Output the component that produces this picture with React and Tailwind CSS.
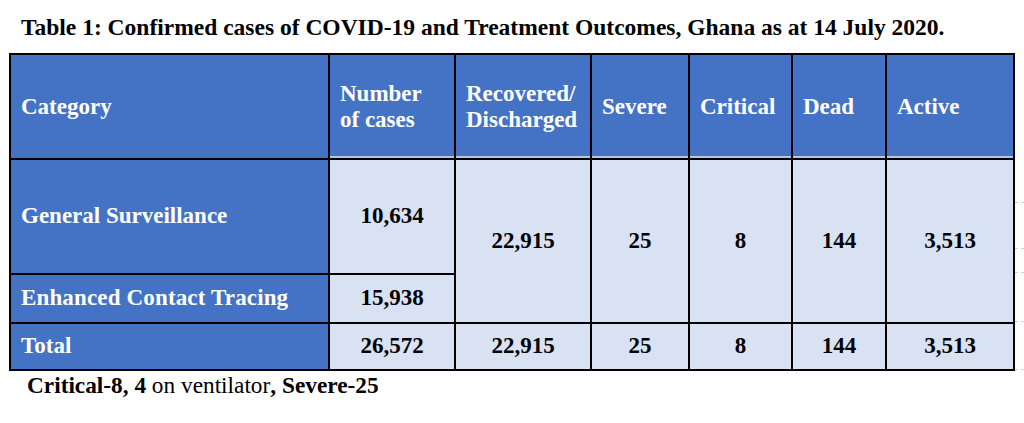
import React from "react";

const H = "bg-[#4472c4] text-white font-bold flex items-center px-[10px] leading-[26px]";
const HN = H + " shadow-[inset_0_-2px_0_#b4c6e7]";
const L = "bg-[#d9e2f3] text-black font-bold flex items-center justify-center";
const C = "bg-[#4472c4] text-white font-bold flex items-center pl-[10px]";

export default function App() {
  return (
    <div className="w-[1024px] h-[423px] bg-white font-[family-name:'Liberation_Serif',serif] text-black overflow-hidden">
      <div className="pt-[15px] pl-[21px] text-[23.5px] leading-[25px] font-bold mb-[13px] whitespace-nowrap">
        Table 1: Confirmed cases of COVID-19 and Treatment Outcomes, Ghana as at 14 July 2020.
      </div>
      <div className="flex pl-[9px]">
        <div className="w-[1006px] bg-black p-[2px] grid gap-[2px] grid-cols-[317px_124px_134px_96px_101px_92px_126px] grid-rows-[103px_113px_47px_45px] text-[23px]">
          <div className={H}>Category</div>
          <div className={HN}>Number<br />of cases</div>
          <div className={HN}>Recovered/<br />Discharged</div>
          <div className={HN}>Severe</div>
          <div className={HN}>Critical</div>
          <div className={HN}>Dead</div>
          <div className={HN}>Active</div>

          <div className={C}>General Surveillance</div>
          <div className={L}>10,634</div>
          <div className={L + " row-span-2"}>22,915</div>
          <div className={L + " row-span-2"}>25</div>
          <div className={L + " row-span-2"}>8</div>
          <div className={L + " row-span-2"}>144</div>
          <div className={L + " row-span-2"}>3,513</div>

          <div className={C + " tracking-[0.15px]"}>Enhanced Contact Tracing</div>
          <div className={L}>15,938</div>

          <div className={C}>Total</div>
          <div className={L}>26,572</div>
          <div className={L}>22,915</div>
          <div className={L}>25</div>
          <div className={L}>8</div>
          <div className={L}>144</div>
          <div className={L}>3,513</div>
        </div>
        <div className="w-[9px] flex flex-col">
          <div className="h-[150px] border-b border-dashed border-[#cfcfcf]" />
          <div className="h-[46px] border-b border-dashed border-[#cfcfcf]" />
          <div className="h-[24px] border-b border-dashed border-[#cfcfcf]" />
          <div className="h-[49px] border-b border-dashed border-[#cfcfcf]" />
          <div className="h-[48px] border-b border-dashed border-[#cfcfcf]" />
        </div>
      </div>
      <div className="pl-[27px] text-[23.3px] leading-[26px] mt-[1px] whitespace-nowrap">
        <span className="font-bold">Critical-8, 4</span> on ventilator<span className="font-bold">, Severe-25</span>
      </div>
    </div>
  );
}
